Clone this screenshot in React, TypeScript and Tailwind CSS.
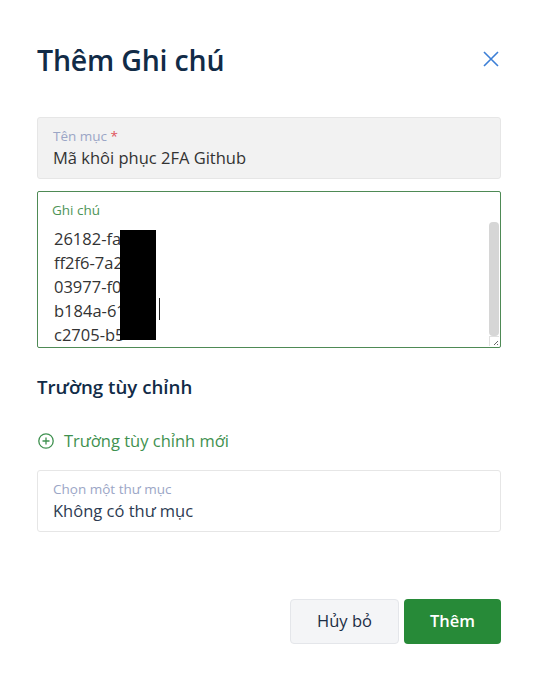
import { useState } from 'react'

const codes = ['26182-fa', 'ff2f6-7a2', '03977-f0', 'b184a-61', 'c2705-b5']

export default function App() {
  const [name] = useState('Mã khôi phục 2FA Github')

  return (
    <div className="min-h-[679px] w-[540px] bg-white pl-[37px] pr-[39px] font-['Open_Sans',sans-serif]">
      <div className="flex h-[120px] items-start justify-between pt-[40px]">
        <h1 className="text-[28.5px] font-semibold leading-[40px] tracking-[-0.2px] text-[#112b47]">Thêm Ghi chú</h1>
        <button className="mt-[11px] mr-[2px] text-[#3c7fd6]">
          <svg className="h-[16px] w-[16px]" viewBox="0 0 16 16" fill="none" stroke="currentColor" strokeWidth={1.6}>
            <path d="M1 1l14 14M15 1L1 15" />
          </svg>
        </button>
      </div>

      <div className="mt-[-3px] rounded-[3px] border border-[#e6e6e6] bg-[#f2f2f2] px-[15px] pt-[9px] pb-[9px]">
        <div className="text-[13.5px] leading-[18px] text-[#9ba6c6]">
          Tên mục <span className="text-[#e0525b]">*</span>
        </div>
        <div className="mt-[2px] text-[16.5px] leading-[22px] text-[#333333]">{name}</div>
      </div>

      <div className="relative mt-[12px] h-[157px] rounded-[2px] border border-[#4e8a55] bg-white">
        <div className="px-[14px] pt-[9px] text-[13.5px] leading-[18px] text-[#4e9457]">Ghi chú</div>
        <div className="mt-[3px] h-[125px] overflow-hidden pl-[16px]">
          <div className="pt-[5px] text-[16.5px] leading-[24px] text-[#333333]">
            {codes.map(c => (
              <div key={c}>{c}</div>
            ))}
          </div>
        </div>
        <div className="absolute top-[38px] left-[82px] h-[110px] w-[36px] bg-black" />
        <div className="absolute top-[106px] left-[121px] h-[22px] w-px bg-[#222]" />
        <div className="absolute top-[30px] right-[1px] h-[114px] w-[10px] rounded-[4px] bg-[#d6d6d6]" />
        <div className="absolute right-[1px] bottom-[1px] flex h-[10px] w-[10px] items-end justify-end border-t border-l border-[#e0e0e0] bg-white">
          <svg className="h-[8px] w-[8px]" viewBox="0 0 8 8" fill="none" stroke="#666" strokeWidth={1}>
            <path d="M7 3L3 7M7 6L6 7" />
          </svg>
        </div>
      </div>

      <h2 className="mt-[26px] text-[18.7px] font-semibold leading-[26px] text-[#112b47]">Trường tùy chỉnh</h2>

      <button className="mt-[30px] flex items-center gap-[10px] pl-[1px] text-[16.5px] leading-[22px] text-[#3f9150]">
        <svg className="h-[16px] w-[16px]" viewBox="0 0 16 16" fill="none" stroke="currentColor" strokeWidth={1.3}>
          <circle cx="8" cy="8" r="7.2" />
          <path d="M8 4.5v7M4.5 8h7" />
        </svg>
        Trường tùy chỉnh mới
      </button>

      <div className="mt-[18px] rounded-[3px] border border-[#e6e6e6] bg-white px-[15px] pt-[9px] pb-[9px]">
        <div className="text-[13.5px] leading-[18px] text-[#9ba6c6]">Chọn một thư mục</div>
        <div className="mt-[2px] text-[16.5px] leading-[22px] text-[#2d3b52]">Không có thư mục</div>
      </div>

      <div className="mt-[67px] flex justify-end gap-[5px]">
        <button className="h-[45px] w-[109px] rounded-[4px] border border-[#e4e6ea] bg-[#f4f5f7] text-[16.5px] font-medium text-[#1c2d45]">
          Hủy bỏ
        </button>
        <button className="h-[45px] w-[97px] rounded-[4px] bg-[#278a38] text-[16.5px] font-semibold text-white">
          Thêm
        </button>
      </div>
    </div>
  )
}
